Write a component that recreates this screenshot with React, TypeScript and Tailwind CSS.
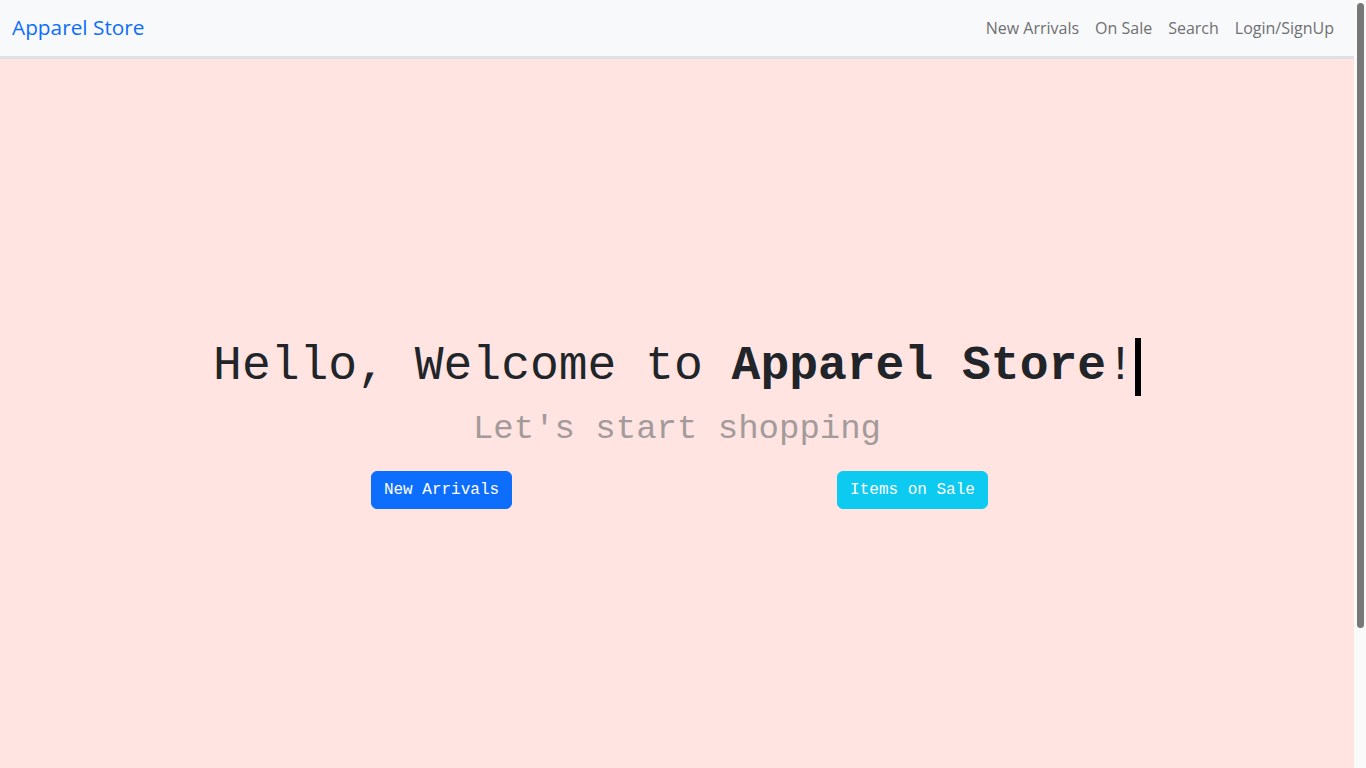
const navLinks = ["New Arrivals", "On Sale", "Search", "Login/SignUp"];

const App: React.FC = () => {
  return (
    <div className="w-full h-screen flex overflow-hidden">
      <div className="flex-1 flex flex-col bg-[#ffe4e1]">
        <nav className="h-[59px] shrink-0 bg-[#f8f9fa] border-b-[3px] border-[#dfe0e6] flex items-center justify-between px-3 font-['Open_Sans',sans-serif]">
          <a className="text-[#0d6efd] text-[20.8px] py-[5px]">Apparel Store</a>
          <ul className="flex items-center">
            {navLinks.map((link) => (
              <li key={link}>
                <a className="block px-2 py-2 text-base text-[#6f7072]">{link}</a>
              </li>
            ))}
          </ul>
        </nav>

        <main className="flex-1 flex flex-col items-center pt-[279px] font-['Liberation_Mono',monospace]">
          <h1 className="text-[48px] leading-[1.2] text-[#212529] whitespace-pre flex items-stretch">
            <span>
              Hello, Welcome to <b>Apparel Store</b>!
            </span>
            <span className="w-[6px] bg-black" />
          </h1>

          <p className="mt-[13px] text-[34px] leading-[1.2] text-[#a39b9b]">
            Let's start shopping
          </p>

          <div className="mt-[22px] w-[942px] grid grid-cols-2 justify-items-center">
            <button className="bg-[#0d6efd] text-white text-base leading-6 px-3 py-[6px] border border-[#0d6efd] rounded-md">
              New Arrivals
            </button>
            <button className="bg-[#0dcaf0] text-white text-base leading-6 px-3 py-[6px] border border-[#0dcaf0] rounded-md">
              Items on Sale
            </button>
          </div>
        </main>
      </div>

      {/* scrollbar */}
      <div className="w-3 shrink-0 bg-[#fafafa] flex justify-center pt-[3px]">
        <div className="w-[7px] h-[625px] rounded-full bg-[#787878]" />
      </div>
    </div>
  );
};

export default App;
